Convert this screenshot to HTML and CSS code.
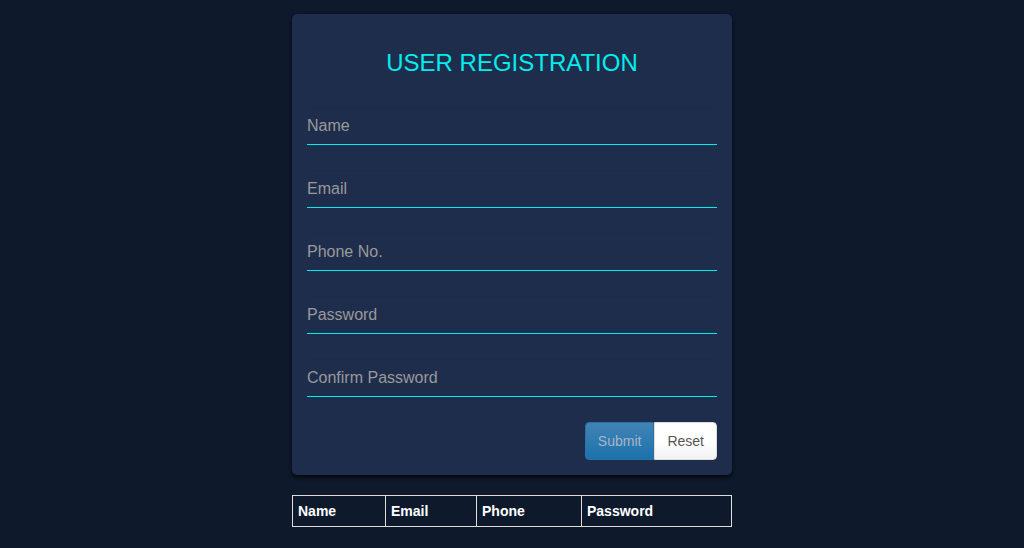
FILE: index.html
```html
<!DOCTYPE html>
<html lang="en">
<head>
<meta charset="utf-8">
<meta name="viewport" content="width=device-width, initial-scale=1">
<title>User Registration</title>
<link rel="stylesheet" href="styles.css">
</head>
<body>
<main class="page">
  <form class="card">
    <h1 class="title">USER REGISTRATION</h1>
    <div class="fields">
      <input class="field" type="text" placeholder="Name" aria-label="Name">
      <input class="field" type="email" placeholder="Email" aria-label="Email">
      <input class="field" type="tel" placeholder="Phone No." aria-label="Phone No.">
      <input class="field" type="password" placeholder="Password" aria-label="Password">
      <input class="field" type="password" placeholder="Confirm Password" aria-label="Confirm Password">
    </div>
    <div class="actions">
      <button class="btn btn-submit" type="submit" disabled>Submit</button>
      <button class="btn btn-reset" type="reset">Reset</button>
    </div>
  </form>
  <table class="users">
    <colgroup>
      <col class="col-name"><col class="col-email"><col class="col-phone"><col>
    </colgroup>
    <thead>
      <tr><th scope="col">Name</th><th scope="col">Email</th><th scope="col">Phone</th><th scope="col">Password</th></tr>
    </thead>
  </table>
</main>
</body>
</html>
```
FILE: styles.css
```css
* {
  box-sizing: border-box;
}

body {
  margin: 0;
  background: #0e192c;
  color: #fff;
  font: 14px/20px "Liberation Sans", Arial, sans-serif;
}

.page {
  max-width: 440px;
  margin: 0 auto;
  padding: 14px 0 20px;
}

.card {
  margin-bottom: 20px;
  padding: 15px;
  border-radius: 5px;
  background: #1f2d4c;
  box-shadow: 0 2px 4px rgba(0, 0, 0, 0.8);
}

.title {
  margin: 20px 0 30px;
  color: #00eeee;
  font-size: 24px;
  font-weight: 400;
  line-height: 28px;
  text-align: center;
}

.fields {
  display: grid;
  gap: 25px;
}

.field {
  width: 100%;
  height: 38px;
  padding: 0;
  border: 1px solid #1e2a4a;
  border-width: 1px 0;
  border-bottom-color: #00eeee;
  background: transparent;
  color: #fff;
  font: inherit;
  font-size: 16px;
  outline: 0;
}

.field::placeholder {
  color: #999;
  opacity: 1;
}

.actions {
  display: flex;
  justify-content: flex-end;
  margin-top: 25px;
}

.btn {
  height: 38px;
  padding: 0 12px;
  border: 1px solid #ddd;
  font: inherit;
}

.btn-submit {
  border-color: #2a71a8;
  border-radius: 4px 0 0 4px;
  background: linear-gradient(#4283b5, #1b72ad);
  color: #a9b5c5;
}

.btn-reset {
  border-radius: 0 4px 4px 0;
  background: linear-gradient(#fff 50%, #f2f2f2);
  color: #555;
}

.users {
  width: 100%;
  border-collapse: collapse;
}

.users th {
  padding: 5px;
  border: 1px solid #ddd;
  text-align: left;
}

.col-name {
  width: 93px;
}

.col-email {
  width: 91px;
}

.col-phone {
  width: 105px;
}
```
